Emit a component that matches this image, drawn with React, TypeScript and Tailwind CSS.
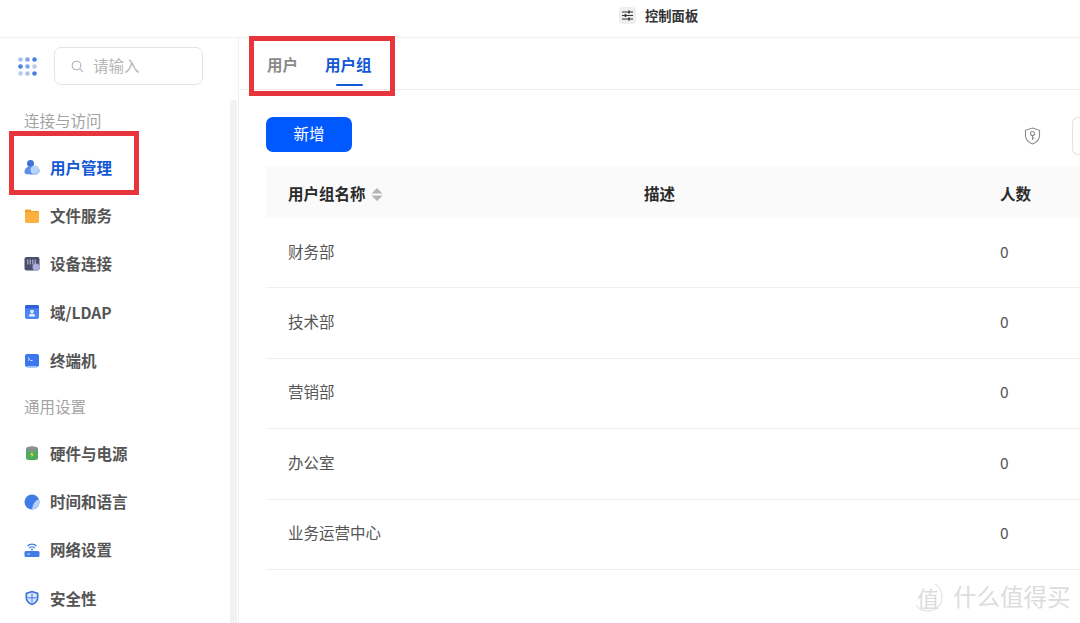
import type { ReactNode } from 'react'

const groups = ['财务部', '技术部', '营销部', '办公室', '业务运营中心']

function UserIcon() {
  return (
    <svg width="17" height="17" viewBox="0 0 16 16">
      <circle cx="6.500" cy="4" r="3.500" fill="#3f73d8" />
      <path d="M0.500 12.500c0-3.500 2.500-5.500 6-5.500s5 2 5 5.500c0 1.300-1 2.200-2.500 2.200H3c-1.500 0-2.500-.9-2.500-2.200z" fill="#5b8de8" />
      <circle cx="11" cy="10.500" r="4.500" fill="#b9d3f7" />
      <path d="M6 14.700h5c2.500 0 4.500-1.800 4.500-4.200" stroke="#7ea8ee" strokeWidth="0.800" fill="none" />
    </svg>
  )
}

function FolderIcon() {
  return (
    <svg width="16" height="16" viewBox="0 0 16 16">
      <path d="M1 3C1 2.200 1.500 1.500 2.300 1.500h4L7.800 3h5.900c.8 0 1.300.6 1.300 1.400v2H1z" fill="#ee9f2e" />
      <rect x="1" y="4" width="14" height="11" rx="1.500" fill="#fbb03f" />
    </svg>
  )
}

function DeviceIcon() {
  return (
    <svg width="16" height="16" viewBox="0 0 16 16">
      <rect x="0.500" y="1" width="15" height="13.500" rx="2" fill="#4a4f70" />
      <path d="M3 3.500h1.500v5H3zM5.500 3.500H7v5H5.500zM8 3.500h1.500v5H8zM10.500 3.500H12v5h-1.500z" fill="#9a9db5" />
      <circle cx="12" cy="11" r="3.500" fill="#a9aedb" />
    </svg>
  )
}

function LdapIcon() {
  return (
    <svg width="16" height="16" viewBox="0 0 16 16">
      <rect x="1" y="1" width="14" height="14" rx="2" fill="#4b86f2" />
      <rect x="1" y="1" width="14" height="3.500" rx="1.500" fill="#2f62d8" />
      <circle cx="8" cy="7.500" r="1.800" fill="#e8f0ff" />
      <path d="M4.800 12.500c0-2 1.400-3 3.200-3s3.200 1 3.200 3z" fill="#e8f0ff" />
    </svg>
  )
}

function TerminalIcon() {
  return (
    <svg width="16" height="16" viewBox="0 0 16 16">
      <rect x="1" y="1" width="14" height="13" rx="2" fill="#3b78ee" />
      <rect x="3" y="13" width="10" height="2" rx="1" fill="#a9c6f8" />
      <path d="M4 4.500l1.800 1.500L4 7.500" stroke="#fff" strokeWidth="0.800" fill="none" />
      <path d="M6.500 7.500h2" stroke="#fff" strokeWidth="0.800" />
    </svg>
  )
}

function PowerIcon() {
  return (
    <svg width="16" height="16" viewBox="0 0 16 16">
      <rect x="2" y="2" width="12" height="13" rx="2.500" fill="#4cab5c" />
      <ellipse cx="8" cy="4" rx="6" ry="2.800" fill="#8b8f8c" />
      <path d="M8.500 6.500L6 10h1.800l-.4 2.500L10 9H8.200z" fill="#f1d13a" />
    </svg>
  )
}

function GlobeIcon() {
  return (
    <svg width="16" height="16" viewBox="0 0 16 16">
      <circle cx="8" cy="8" r="7.500" fill="#3f7ce8" />
      <path d="M8 15.500c3.500-.5 7.500-3 7.500-7.500 0-1-.2-1.800-.5-2.500C12 6 9 8.500 8 15.500z" fill="#b4d2f8" />
    </svg>
  )
}

function RouterIcon() {
  return (
    <svg width="16" height="16" viewBox="0 0 16 16">
      <path d="M3.500 4C6 1.500 10 1.500 12.500 4M5.300 6C6.800 4.500 9.200 4.500 10.700 6" stroke="#3f7ce8" strokeWidth="1.300" fill="none" />
      <circle cx="8" cy="7.500" r="1" fill="#3f7ce8" />
      <rect x="0.500" y="9" width="15" height="6" rx="1.500" fill="#3f7ce8" />
      <rect x="3" y="11.500" width="3" height="1" fill="#cfe0fb" />
    </svg>
  )
}

function ShieldIcon() {
  return (
    <svg width="16" height="16" viewBox="0 0 16 16">
      <path d="M8 0.800l6.500 2v5c0 3.600-2.800 6-6.500 7.500C4.300 13.800 1.500 11.400 1.500 7.800v-5z" fill="#3f73d8" />
      <path d="M8 2.500l4.800 1.500v3.800c0 2.700-2 4.500-4.800 5.700-2.800-1.200-4.800-3-4.800-5.700V4z" fill="#dfe9fb" />
      <path d="M8 3.500v9M3.800 7.800h8.400" stroke="#3f73d8" strokeWidth="1" />
    </svg>
  )
}

function NavItem({ icon, label, active }: { icon: ReactNode; label: string; active?: boolean }) {
  return (
    <div
      className={`flex h-[48.4px] items-center gap-[10px] pl-[24px] text-[15.500px] font-semibold ${
        active ? 'text-[#1257d6]' : 'text-[#555]'
      }`}
    >
      <span className="flex w-[16px] shrink-0">{icon}</span>
      <span>{label}</span>
    </div>
  )
}

function SectionLabel({ label }: { label: string }) {
  return <div className="flex h-[44px] items-center pl-[24px] text-[15.500px] text-[#a3a3a3]">{label}</div>
}

function AppDots() {
  const colors = ['#a9c1ee', '#7fa3e6', '#4a7fdc', '#4a7fdc', '#7fa3e6', '#b8ccf0', '#b8ccf0', '#a9c1ee', '#4a7fdc']
  return (
    <div className="grid w-[19px] grid-cols-3 gap-[2px]">
      {colors.map((color, i) => (
        <svg key={i} width="5" height="5" viewBox="0 0 5 5">
          <circle cx="2.500" cy="2.500" r="2.300" fill={color} />
        </svg>
      ))}
    </div>
  )
}

function App() {
  return (
    <main
      className="relative h-[623px] w-[1080px] overflow-hidden bg-white"
      style={{ fontFamily: '"Noto Sans CJK SC", "Noto Sans", sans-serif' }}
    >
      <header className="flex h-[38px] items-center gap-[9px] border-b border-[#f1f1f1] pb-[6px] pl-[619px]">
        <span className="flex h-[17px] w-[17px] items-center justify-center rounded-[4px] bg-[#eeeef0]">
          <svg width="13" height="11" viewBox="0 0 13 11" stroke="#333" strokeWidth="1.200">
            <path d="M1 2h11M1 5.500h11M1 9h11" />
            <path d="M8 0.500v3M4.500 4v3M8 7.500v3" strokeWidth="1.600" />
          </svg>
        </span>
        <span className="text-[13.300px] font-semibold text-[#333]">控制面板</span>
      </header>

      <div className="flex h-[585px]">
        <aside className="relative w-[239px] shrink-0 overflow-hidden border-r border-[#f1f1f1]">
          <div className="flex h-[62px] items-start gap-[17px] pl-[18px] pt-[9px]">
            <div className="mt-[10px]">
              <AppDots />
            </div>
            <div className="flex h-[38px] w-[149px] items-center gap-[9px] rounded-[7px] border border-[#e3e3e3] pl-[16px] text-[15.500px] text-[#b5b5b5]">
              <svg width="13" height="13" viewBox="0 0 13 13" fill="none" stroke="#b5b5b5" strokeWidth="1.100">
                <circle cx="5.500" cy="5.500" r="4.300" />
                <path d="M8.700 8.700L12 12" />
              </svg>
              <span>请输入</span>
            </div>
          </div>
          <div className="mr-[8px] mt-[-1px]">
            <SectionLabel label="连接与访问" />
            <NavItem icon={<UserIcon />} label="用户管理" active />
            <NavItem icon={<FolderIcon />} label="文件服务" />
            <NavItem icon={<DeviceIcon />} label="设备连接" />
            <NavItem icon={<LdapIcon />} label="域/LDAP" />
            <NavItem icon={<TerminalIcon />} label="终端机" />
            <SectionLabel label="通用设置" />
            <NavItem icon={<PowerIcon />} label="硬件与电源" />
            <NavItem icon={<GlobeIcon />} label="时间和语言" />
            <NavItem icon={<RouterIcon />} label="网络设置" />
            <NavItem icon={<ShieldIcon />} label="安全性" />
          </div>
          <div className="absolute bottom-0 right-[1px] top-[62px] w-[7px] rounded-t-[4px] bg-[#f2f2f2]" />
        </aside>

        <section className="min-w-0 flex-1">
          <div className="flex h-[52px] items-stretch gap-[27px] border-b border-[#ececec] pl-[28px] pt-[2px] text-[15.500px] font-semibold">
            <div className="flex items-center text-[#8a8a8a]">用户</div>
            <div className="relative flex items-center text-[#1257d6]">
              用户组
              <span className="absolute bottom-[3px] left-[11px] h-[2px] w-[27px] rounded-full bg-[#1257d6]" />
            </div>
          </div>

          <div className="flex h-[76px] items-start justify-between pl-[27px] pt-[27px]">
            <button className="flex h-[35px] w-[86px] items-center justify-center rounded-[7px] bg-[#0058ff] pb-[2px] text-[15.500px] text-white">
              新增
            </button>
            <div className="flex items-center gap-[31px]">
              <svg width="17" height="18" viewBox="0 0 17 18" fill="none" stroke="#8c8c8c" strokeWidth="1.100">
                <path d="M8.500 1l7 2.300v5.500c0 3.800-3 6.500-7 8.200-4-1.700-7-4.400-7-8.200V3.300z" />
                <circle cx="8.500" cy="6.500" r="2" />
                <path d="M8.500 8.500v4.500M8.500 11h2" />
              </svg>
              <div className="h-[38px] w-[8px] rounded-l-[6px] border-y border-l border-[#e3e3e3]" />
            </div>
          </div>

          <div className="ml-[27px]">
            <div className="grid h-[52px] grid-cols-[356px_356px_1fr] items-center bg-[#fafafa] pl-[22px] pt-[4px] text-[15.500px] font-semibold text-[#2b2b2b]">
              <div className="flex items-center gap-[5px]">
                用户组名称
                <svg width="12" height="15" viewBox="0 0 12 15" fill="#b3b3b3">
                  <path d="M6 1l5.500 5.500H0.500zM6 14L0.500 8.500H11.500z" />
                </svg>
              </div>
              <div>描述</div>
              <div>人数</div>
            </div>
            {groups.map((name) => (
              <div
                key={name}
                className="grid h-[70.400px] grid-cols-[356px_356px_1fr] items-center border-b border-[#efefef] pb-[3px] pl-[22px] text-[15.500px] text-[#555]"
              >
                <div>{name}</div>
                <div />
                <div>0</div>
              </div>
            ))}
          </div>
        </section>
      </div>

      {/* annotation boxes drawn over the screenshot */}
      <div className="absolute left-[9px] top-[131px] h-[64px] w-[130px] border-[5px] border-[#e8353b]" />
      <div className="absolute left-[249px] top-[36px] h-[60px] w-[146px] border-[5px] border-[#e8353b]" />

      {/* watermark */}
      <div className="absolute left-[913px] top-[582px] flex items-center gap-[10px] text-[#dcdcdc]">
        <span className="relative flex h-[30px] w-[30px] items-center justify-center text-[22px] leading-none">
          值
          <svg className="absolute inset-0" width="30" height="30" viewBox="0 0 30 30" fill="none" stroke="#dcdcdc" strokeWidth="1">
            <path d="M22 2C27 5 29 10 29 15C29 23 23 29 15 29C10 29 6 27 3 23" />
          </svg>
        </span>
        <span className="text-[23.500px] leading-none">什么值得买</span>
      </div>
    </main>
  )
}

export default App
